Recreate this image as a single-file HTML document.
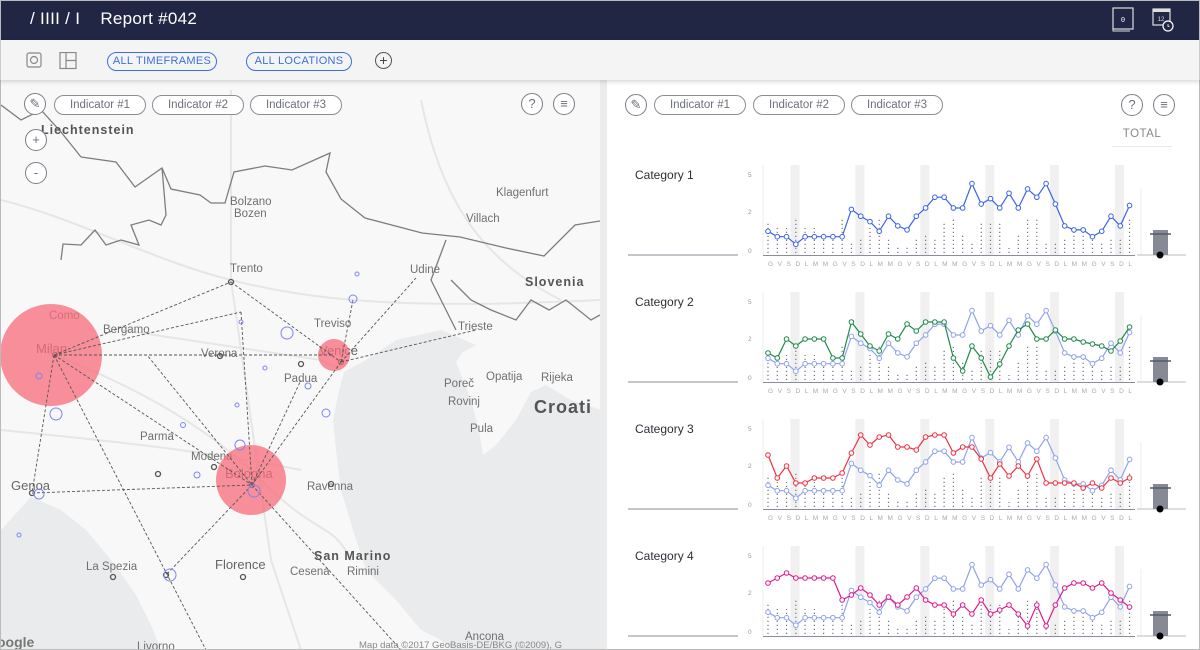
<!DOCTYPE html>
<html><head><meta charset="utf-8">
<style>
*{box-sizing:border-box;margin:0;padding:0}
body{width:1200px;height:650px;overflow:hidden;font-family:"Liberation Sans",sans-serif;background:#ececec;position:relative}
#hdr{position:absolute;left:0;top:0;width:1200px;height:40px;background:#212645;color:#fff}
#hdr .t{position:absolute;left:30px;top:9px;font-size:17px;letter-spacing:0.3px}
#tb{position:absolute;left:0;top:40px;width:1200px;height:40px;background:#f4f4f4;box-shadow:0 2px 4px rgba(0,0,0,.15);z-index:2;border-left:1px solid #ccc;border-right:1px solid #ccc}
.pill{position:absolute;height:19px;border:1.3px solid #3b6fe0;border-radius:10px;color:#3b6fe0;font-size:11px;line-height:17px;text-align:center;letter-spacing:0.3px}
.ind{position:absolute;height:20px;border:1px solid #8a8d96;border-radius:10px;color:#6d707a;font-size:11.5px;line-height:18px;text-align:center;background:#fff}
.circ{position:absolute;width:22px;height:22px;border:1px solid #7a7d86;border-radius:50%;background:#fff;color:#6d707a;font-size:13px;line-height:20px;text-align:center}
#map{position:absolute;left:1px;top:80px;width:599px;height:569px;background:#f8f8f8;overflow:hidden}
#right{position:absolute;left:607px;top:80px;width:592px;height:569px;background:#fff}
.cat{position:absolute;left:28px;font-size:12px;color:#2d2f36}
</style></head><body>
<div id="hdr"><div class="t">/ IIII / I &nbsp;&nbsp;&nbsp;Report #042</div>
<svg style="position:absolute;left:1110px;top:6px" width="70" height="28">
<rect x="3" y="2" width="20" height="21" fill="none" stroke="#ddd" stroke-width="1.2"/>
<path d="M3 5 V25 H20" fill="none" stroke="#ddd" stroke-width="1"/>
<text x="13" y="16" font-size="7" fill="#fff" text-anchor="middle" font-family="Liberation Mono">0</text>
<rect x="43" y="3" width="17" height="16" fill="none" stroke="#ddd" stroke-width="1.2"/>
<rect x="43" y="3" width="17" height="3" fill="#ddd"/>
<text x="51" y="15" font-size="6" fill="#ddd" text-anchor="middle">12</text>
<circle cx="58" cy="20" r="5" fill="#212645" stroke="#fff" stroke-width="1.2"/>
<path d="M58 18v2.5h1.5" stroke="#fff" stroke-width="0.8" fill="none"/>
</svg></div>
<div id="tb">
<svg style="position:absolute;left:25px;top:12px" width="60" height="18">
<rect x="1" y="1" width="14" height="14" rx="2" fill="none" stroke="#888" stroke-width="1.2"/><circle cx="8" cy="8" r="3.5" fill="none" stroke="#888" stroke-width="1.2"/>
<rect x="34" y="0.5" width="16" height="16" fill="none" stroke="#888" stroke-width="1.2"/><path d="M40 0.5v16M40 8.5h10" stroke="#888" stroke-width="1.2"/>
</svg>
<div class="pill" style="left:106px;top:12px;width:110px">ALL TIMEFRAMES</div>
<div class="pill" style="left:245px;top:12px;width:106px">ALL LOCATIONS</div>
<div class="circ" style="left:374px;top:12px;width:17px;height:17px;line-height:14px;font-size:14px;border-color:#555;color:#444;background:none">+</div>
</div>

<div id="map">
<svg width="599" height="569" viewBox="0 80 599 569" style="position:absolute;left:0;top:0">
<polygon points="475,345 462,352 455,362 462,380 470,400 478,430 482,455 495,445 515,420 530,392 545,385 570,400 600,410 600,650 452,650 440,640 420,630 395,600 365,570 352,530 340,490 335,450 332,420 337,395 343,372 365,360 395,340 440,330" fill="#e9ebec"/>
<polygon points="0,530 30,497 60,510 85,530 110,560 135,595 150,625 160,650 0,650" fill="#e9ebec"/>
<g fill="none" stroke="#e6e6e6" stroke-width="2">
<path d="M0 200 C80 220 150 260 230 280 S400 310 600 300"/><path d="M230 90 L230 280 L250 420 L270 560 L300 650"/><path d="M40 350 C120 380 200 420 260 480 S330 520 350 560"/><path d="M420 100 C440 200 480 260 560 300"/><path d="M120 330 L320 360 L340 370"/><path d="M0 430 C100 440 200 450 300 470"/></g>
<g fill="none" stroke="#7d7d7d" stroke-width="1.3">
<polyline points="80,157 115,162 134,187 161,168 170,189 199,195 210,203 224,203 233,172 264,166 291,170 329,153 325,172 340,199 364,218 421,233 459,237 505,248 543,256 574,225 599,221"/>
<polyline points="161,168 165,215 160,225 148,220 130,225 138,245 120,240 105,245 94,230 80,245 62,244 60,260"/>
<polyline points="0,105 20,120 40,110 60,132 80,157"/>
<polyline points="450,280 470,300 490,310 515,320 530,300 548,310 565,300 590,320 599,315"/>
<polyline points="445,240 430,280 440,300 455,330"/>
</g>
<g font-size="11.5" fill="#707070">
<text x="229" y="272">Trento</text><text x="229" y="205">Bolzano</text><text x="233" y="217">Bozen</text>
<text x="495" y="196">Klagenfurt</text><text x="465" y="222">Villach</text>
<text x="409" y="273">Udine</text><text x="313" y="327">Treviso</text><text x="457" y="330">Trieste</text>
<text x="102" y="333">Bergamo</text><text x="48" y="319">Como</text><text x="200" y="357">Verona</text>
<text x="283" y="382">Padua</text><text x="443" y="387">Poreč</text><text x="485" y="380">Opatija</text><text x="540" y="381">Rijeka</text>
<text x="447" y="405">Rovinj</text><text x="469" y="432">Pula</text><text x="139" y="440">Parma</text>
<text x="190" y="460">Modena</text><text x="306" y="490">Ravenna</text><text x="85" y="570">La Spezia</text>
<text x="289" y="575">Cesena</text><text x="346" y="575">Rimini</text><text x="464" y="640">Ancona</text>
<text x="281" y="661">Arezzo</text><text x="136" y="650">Livorno</text>
</g>
<g font-size="13" fill="#666"><text x="214" y="569">Florence</text><text x="35" y="353">Milan</text><text x="224" y="478">Bologna</text><text x="10" y="490">Genoa</text><text x="318" y="355">Venice</text></g>
<g font-size="12.5" font-weight="bold" fill="#555" letter-spacing="1"><text x="524" y="286">Slovenia</text><text x="313" y="560">San Marino</text><text x="40" y="134">Liechtenstein</text></g>
<text x="533" y="413" font-size="18" font-weight="bold" fill="#555" letter-spacing="1">Croati</text>
<g fill="none" stroke="#555" stroke-width="1.3"><circle cx="230" cy="282" r="2.5"/><circle cx="219" cy="356" r="2.5"/><circle cx="300" cy="364" r="2.5"/><circle cx="340" cy="362" r="2.5"/><circle cx="157" cy="474" r="2.5"/><circle cx="213" cy="467" r="2.5"/><circle cx="251" cy="485" r="2.5"/><circle cx="31" cy="493" r="2.5"/><circle cx="242" cy="577" r="2.5"/><circle cx="330" cy="484" r="2.5"/><circle cx="165" cy="575" r="2.5"/><circle cx="112" cy="577" r="2.5"/><circle cx="54" cy="355" r="2.5"/></g>
<circle cx="50" cy="355" r="51" fill="#f76b7a" opacity="0.75"/>
<circle cx="333" cy="355" r="16" fill="#f76b7a" opacity="0.75"/>
<circle cx="250" cy="480" r="35" fill="#f76b7a" opacity="0.75"/>
<g stroke="#555" stroke-width="0.9" stroke-dasharray="3,2" fill="none">
<path d="M53 355L230 282M53 355L240 312M53 355L333 355M53 355L251 485M53 355L31 493M53 355L205 650M53 355L146 355 L251 485M31 493L251 485M230 282L340 362M240 312L251 485M340 362L251 485M340 362L415 278M340 362L475 330M340 362L352 300M251 485L165 575M251 485L400 650M251 485L300 380"/>
</g>
<g fill="none" stroke="#7d86f0" stroke-width="1"><circle cx="352" cy="299" r="4"/><circle cx="286" cy="333" r="6"/><circle cx="325" cy="413" r="4"/><circle cx="239" cy="445" r="5"/><circle cx="38" cy="494" r="5"/><circle cx="169" cy="575" r="6"/><circle cx="182" cy="425" r="2.5"/><circle cx="196" cy="475" r="3"/><circle cx="253" cy="491" r="6"/><circle cx="55" cy="414" r="6"/><circle cx="38" cy="376" r="3"/><circle cx="307" cy="386" r="3"/><circle cx="240" cy="322" r="2"/><circle cx="264" cy="368" r="2"/><circle cx="18" cy="535" r="2"/><circle cx="236" cy="405" r="2"/><circle cx="356" cy="274" r="2"/></g>
<text x="358" y="648" font-size="9.5" fill="#888">Map data ©2017 GeoBasis-DE/BKG (©2009), G</text>
<text x="-4" y="647" font-size="14" font-weight="bold" fill="#777">oogle</text>
</svg>
<div class="circ" style="left:23px;top:13px">&#9998;</div>
<div class="ind" style="left:53px;top:15px;width:92px">Indicator #1</div>
<div class="ind" style="left:151px;top:15px;width:92px">Indicator #2</div>
<div class="ind" style="left:249px;top:15px;width:92px">Indicator #3</div>
<div class="circ" style="left:520px;top:13px">?</div>
<div class="circ" style="left:552px;top:13px">&#8801;</div>
<div class="circ" style="left:24px;top:49px">+</div>
<div class="circ" style="left:24px;top:82px">-</div>
</div>

<div id="right">
<div class="circ" style="left:18px;top:14px">&#9998;</div>
<div class="ind" style="left:47px;top:15px;width:92px">Indicator #1</div>
<div class="ind" style="left:146px;top:15px;width:92px">Indicator #2</div>
<div class="ind" style="left:244px;top:15px;width:92px">Indicator #3</div>
<div class="circ" style="left:514px;top:14px">?</div>
<div class="circ" style="left:546px;top:14px">&#8801;</div>
<div style="position:absolute;left:505px;top:48px;width:60px;text-align:center;font-size:11.5px;color:#888;letter-spacing:0.5px">TOTAL</div>
<div style="position:absolute;left:505px;top:66px;width:60px;height:1px;background:#e6e6e6"></div>
<div class="cat" style="top:88px">Category 1</div>
<div class="cat" style="top:215px">Category 2</div>
<div class="cat" style="top:342px">Category 3</div>
<div class="cat" style="top:469px">Category 4</div>
</div>
<svg id="ch" width="1200" height="650" style="position:absolute;left:0;top:0;pointer-events:none">
<g id="gch"></g>
</svg>
<script>
var L="GVSDLMMGVSDLMMGVSDLMMGVSDLMMGVSDLMMGVSDL";
var z1=[226,241,241,262,241,241,241,241,241,165,184,199,226,184,211,222,184,161,131,131,161,161,93,150,135,161,120,161,108,131,93,150,211,222,222,241,226,184,211,154];
var b1=z1.map(function(v){return 255-(292-v)/2.786;});
var g2=[353,358,339,346,339,339,339,358,358,322,334,346,351,334,339,324,331,322,322,322,358,371,346,358,377,364,346,330,324,339,339,330,339,339,342,344,346,351,341,327];
var r3=[455,478,466,483,483,478,478,478,473,453,435,445,437,435,447,447,450,437,435,435,453,447,447,459,478,464,476,466,476,459,483,483,483,483,488,483,488,478,483,478];
var m4=[583,578,573,578,578,578,578,578,600,595,588,595,605,597,605,597,588,600,605,605,614,605,614,600,614,610,605,614,626,605,626,605,588,583,583,588,583,593,600,607];
var dh=[30,25,25,35,25,25,20,20,35,12,15,25,35,15,8,8,15,20,15,30,35,20,12,30,30,30,5,20,35,35,12,12,15,25,25,15,12,15,15,35];
var x0=768,st=9.27,h="";
function X(i){return x0+i*st;}
var cats=[[null,"#3b63e8"],[g2,"#1f8a4c"],[r3,"#f0303f"],[m4,"#e0198f"]];
for(var c=0;c<4;c++){
 var off=c*127,base=255+off;
 h+='<line x1="628" y1="'+(base)+'" x2="738" y2="'+base+'" stroke="#8a8d9a" stroke-width="1"/>';
 h+='<line x1="763" y1="'+(base+0.5)+'" x2="1135" y2="'+(base+0.5)+'" stroke="#8a8d9a" stroke-width="1"/>';
 h+='<line x1="763" y1="'+(off+165)+'" x2="763" y2="'+base+'" stroke="#eee"/>';
 h+='<line x1="1141" y1="'+(off+188)+'" x2="1141" y2="'+base+'" stroke="#eee"/>';
 h+='<line x1="1137" y1="'+base+'" x2="1186" y2="'+base+'" stroke="#bbb"/>';
 h+='<rect x="1153" y="'+(off+230)+'" width="15" height="'+(base-230-off)+'" fill="#878a95"/>';
 h+='<line x1="1150" y1="'+(off+234)+'" x2="1171" y2="'+(off+234)+'" stroke="#555a68" stroke-width="1.5"/>';
 h+='<circle cx="1160" cy="'+base+'" r="3.5" fill="#000"/>';
 for(var i=0;i<40;i++){if(L[i]=="S")h+='<rect x="'+(X(i)+4)+'" y="'+(off+165)+'" width="9" height="'+(base-165-off)+'" fill="#f0f0f0"/>';}
 for(var i=0;i<40;i++){h+='<line x1="'+X(i)+'" y1="'+(base-2)+'" x2="'+X(i)+'" y2="'+(base-2-dh[i])+'" stroke="#777" stroke-width="1.2" stroke-dasharray="1.2,2.8"/>';}
 h+='<text x="748" y="'+(off+177)+'" font-size="6.5" fill="#999">5</text><text x="748" y="'+(off+214)+'" font-size="6.5" fill="#999">2</text><text x="748" y="'+(off+253)+'" font-size="6.5" fill="#999">0</text>';
 var sets=[];
 if(c==0)sets.push([b1,"#3b63e8",1]);else{sets.push([b1.map(function(v){return v+off}),"#8fa2ee",1]);sets.push([cats[c][0],cats[c][1],1]);}
 sets.forEach(function(s){var d=s[0];var p="";for(var i=0;i<40;i++)p+=X(i)+","+d[i]+" ";
  h+='<polyline points="'+p+'" fill="none" stroke="'+s[1]+'" stroke-width="1.2"/>';
  for(var i=0;i<40;i++)h+='<circle cx="'+X(i)+'" cy="'+d[i]+'" r="2.3" fill="#fff" stroke="'+s[1]+'" stroke-width="1"/>';});
}
document.getElementById("gch").innerHTML=h;
</script>
<svg width="1200" height="650" style="position:absolute;left:0;top:0;pointer-events:none" font-size="6.5" fill="#aaa" font-family="Liberation Sans">
<text x="768" y="266" textLength="364" lengthAdjust="spacing">G V S D L M M G V S D L M M G V S D L M M G V S D L M M G V S D L M M G V S D L</text>
<text x="768" y="393" textLength="364" lengthAdjust="spacing">G V S D L M M G V S D L M M G V S D L M M G V S D L M M G V S D L M M G V S D L</text>
<text x="768" y="520" textLength="364" lengthAdjust="spacing">G V S D L M M G V S D L M M G V S D L M M G V S D L M M G V S D L M M G V S D L</text>
</svg>
<div style="position:absolute;left:0;top:0;width:1200px;height:650px;border:1px solid #bbb;pointer-events:none"></div>
</body></html>
